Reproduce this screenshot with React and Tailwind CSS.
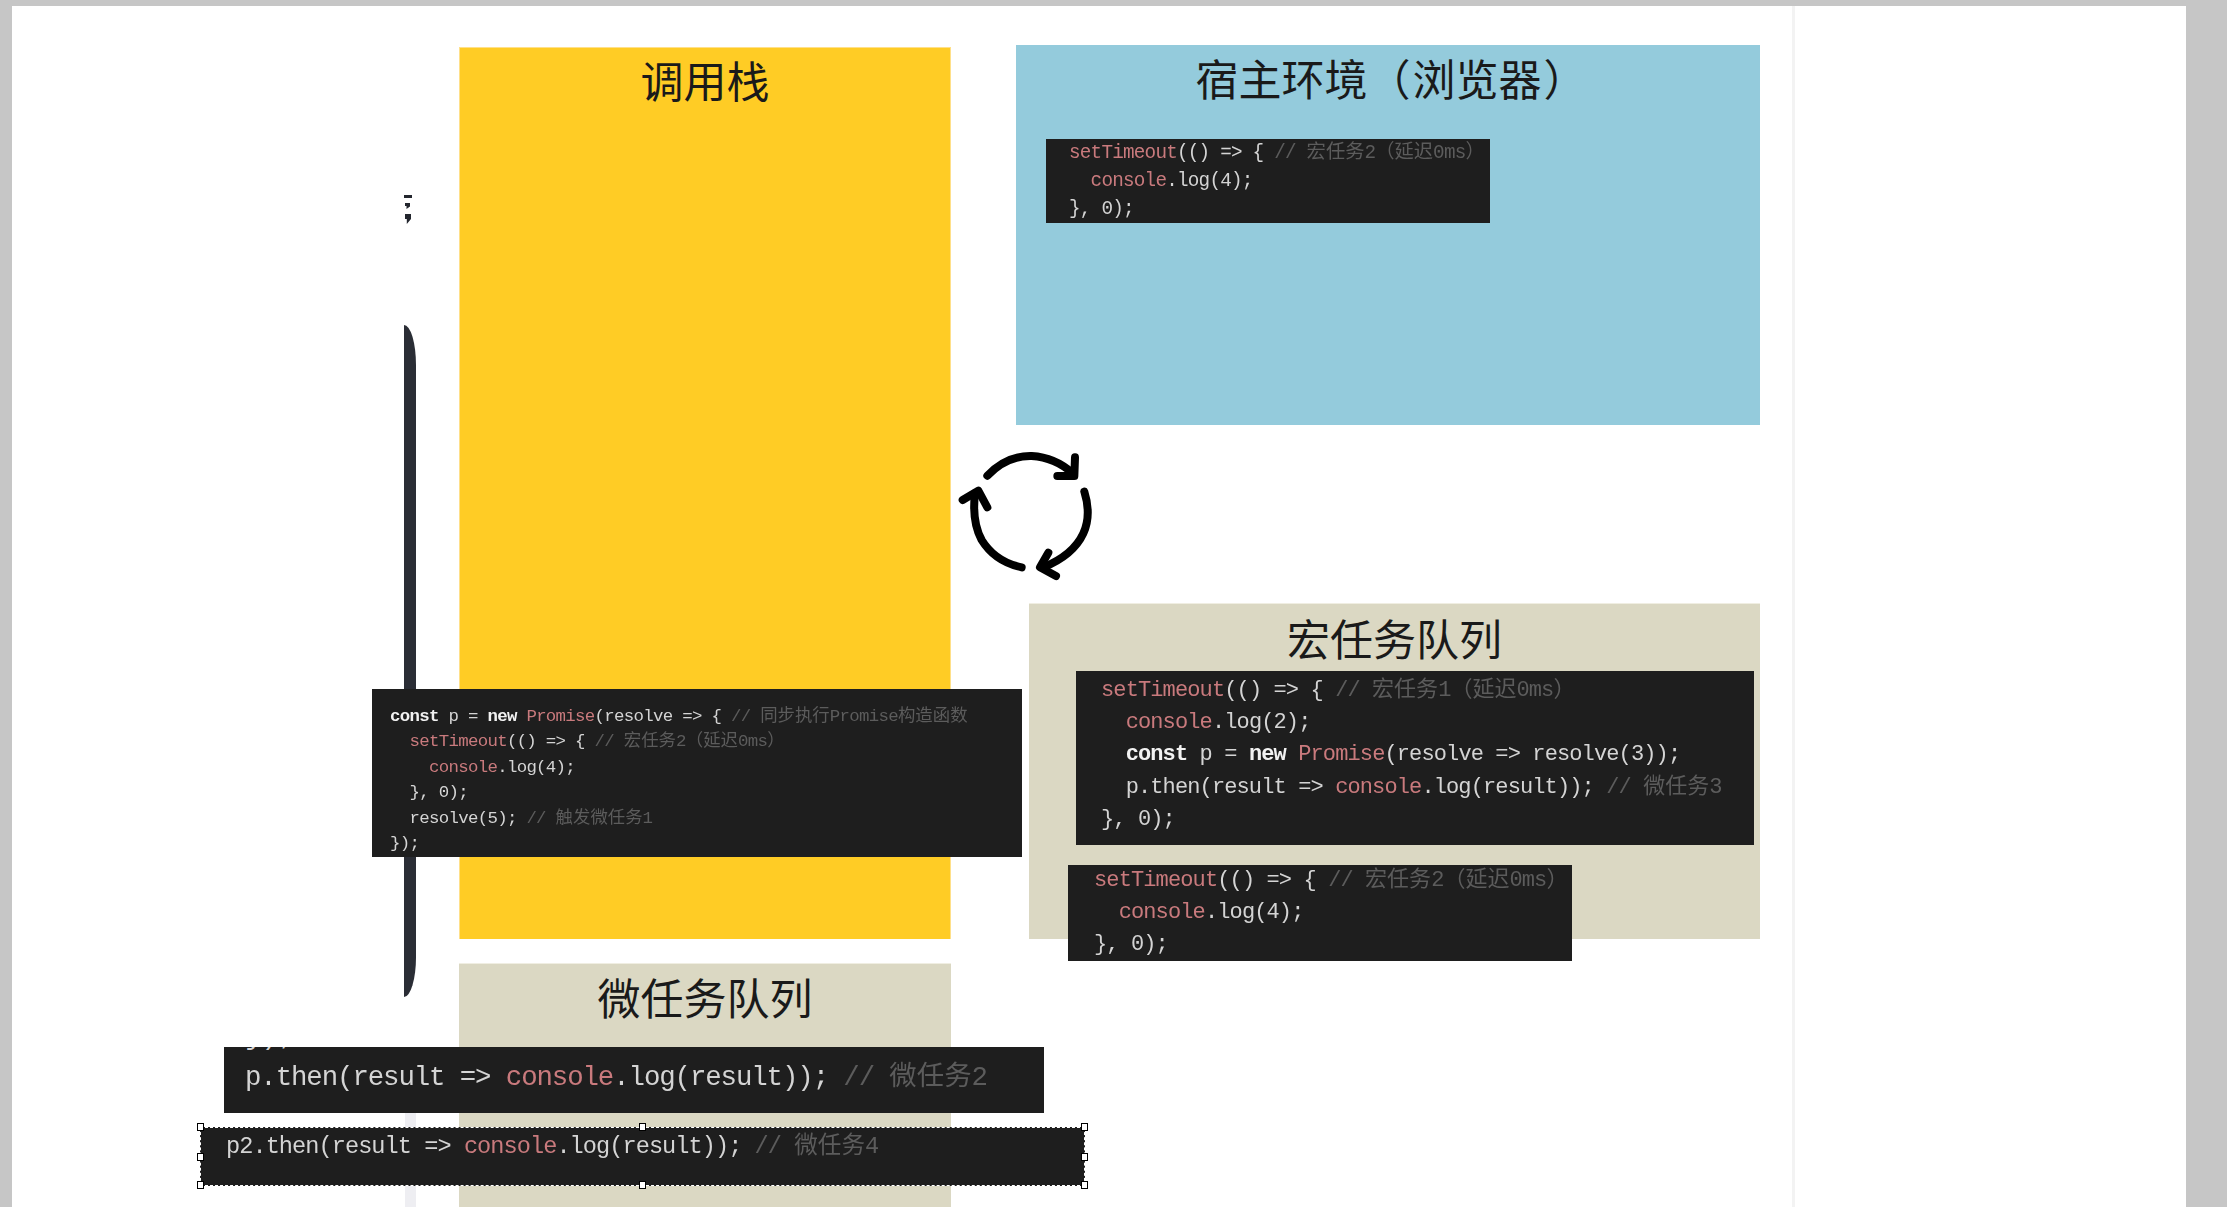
const cjk = "font-['Noto_Sans_CJK_SC','Noto_Sans',sans-serif]";

function J({ children }) {
  return <span className="tracking-normal">{children}</span>;
}
function P({ children }) {
  return <span className="text-[#c97a7d]">{children}</span>;
}
function K({ children }) {
  return <span className="font-bold text-[#f2f2f2]">{children}</span>;
}
function N({ children }) {
  return <span className="text-[#5c5c5c]">{children}</span>;
}
function Code({ className, children, extra }) {
  return (
    <div className={"overflow-hidden bg-[#1e1e1e] " + className}>
      {extra}
      <pre className="m-0 whitespace-pre font-['Liberation_Mono','Noto_Sans_CJK_SC',monospace] tracking-[-0.04em] text-[#d4d4d4] blur-[0.4px]">
        {children}
      </pre>
    </div>
  );
}
function Title({ className = "", children }) {
  return (
    <div className={"text-center text-[43px] leading-[50px] font-normal text-[#1a1a1a] " + cjk + " " + className}>
      {children}
    </div>
  );
}
function Handle({ className }) {
  return <div className={"absolute h-[8px] w-[7px] border border-black bg-white " + className} />;
}

export default function App() {
  return (
    <div className="flex h-[1207px] w-[2227px] overflow-hidden bg-[#c6c6c6] pt-[6px] pr-[41px] pl-[12px]">
      <div className="relative flex flex-1 items-stretch bg-white pl-[447px]">
        {/* left column: call stack + micro queue */}
        <div className="flex w-[492px] flex-col pt-[41px]">
          <div className="h-[892px] border-x border-t border-[#ffe08a] bg-[#ffcc25] pt-[6px]">
            <Title>调用栈</Title>
          </div>
          <div className="mt-[24px] flex-1 border-t border-[#f0eee2] bg-[#dbd8c3] pt-[7px]">
            <Title>微任务队列</Title>
          </div>
        </div>

        {/* right column: host + macro queue */}
        <div className="ml-[65px] flex w-[744px] flex-col pt-[39px]">
          <div className="flex h-[380px] flex-col bg-[#94cbdc] pt-[7px]">
            <Title className="pl-[6px]">
              宿主环境<span className="mr-[2px]">（</span>浏览器<span className="ml-[2px]">）</span>
            </Title>
            <Code className="mt-[37px] ml-[30px] h-[84px] w-[444px] pl-[23px] text-[19.3px] leading-[28px]">
              <P>setTimeout</P>{"(() => { "}<N>{"// "}<J>宏任务</J>2<J>（延迟</J>0ms<J>）</J></N>{"\n  "}<P>console</P>{".log(4);\n}, 0);"}
            </Code>
          </div>
          <div className="mt-[178px] ml-[13px] h-[336px] border-t border-[#f0eee2] bg-[#dbd8c3] pt-[8px]">
            <Title>宏任务队列</Title>
            <Code className="mt-[9px] ml-[47px] h-[174px] w-[678px] pt-[4px] pl-[25px] text-[22px] leading-[32.2px]">
              <P>setTimeout</P>{"(() => { "}<N>{"// "}<J>宏任务</J>1<J>（延迟</J>0ms<J>）</J></N>{"\n  "}<P>console</P>{".log(2);\n  "}<K>const</K>{" p = "}<K>new</K>{" "}<P>Promise</P>{"(resolve => resolve(3));\n  p.then(result => "}<P>console</P>{".log(result)); "}<N>{"// "}<J>微任务</J>3</N>{"\n}, 0);"}
            </Code>
            <Code className="mt-[20px] ml-[39px] h-[96px] w-[504px] pl-[26px] text-[22px] leading-[32px]">
              <P>setTimeout</P>{"(() => { "}<N>{"// "}<J>宏任务</J>2<J>（延迟</J>0ms<J>）</J></N>{"\n  "}<P>console</P>{".log(4);\n}, 0);"}
            </Code>
          </div>
        </div>

        {/* right guide */}
        <div className="ml-[32px] w-[3px] bg-[#f3f3f3]" />

        {/* clipped remnants of an off-slide object */}
        <div className="absolute top-[189px] left-[392px] h-[30px] w-[8px] overflow-hidden">
          <div className="absolute top-0 left-0 h-[3px] w-[8px] bg-[#23262e]" />
          <div className="absolute top-[8px] left-[1px] h-[6px] w-[5px] bg-[#23262e] [clip-path:polygon(0_0,100%_0,100%_60%,30%_100%,30%_50%,0_50%)]" />
          <div className="absolute top-[19px] left-[1px] h-[10px] w-[6px] bg-[#23262e] [clip-path:polygon(0_0,100%_0,100%_50%,30%_100%,30%_50%,0_50%)]" />
        </div>
        <div className="absolute top-[319px] left-[392px] h-[672px] w-[12px] rounded-tr-[12px_40px] rounded-br-[12px_40px] bg-[#2a2d35]" />
        <div className="absolute top-[1107px] bottom-0 left-[393px] w-[11px] bg-[#eeeef2]" />

        {/* loop icon */}
        <svg
          className="absolute top-[424px] left-[928px] h-[170px] w-[180px]"
          viewBox="0 0 540 510"
          fill="none"
          stroke="#000"
          strokeWidth="24"
          strokeLinecap="round"
          strokeLinejoin="round"
        >
          <path d="M142 137 Q200 76 275 78 Q345 82 398 130" />
          <path d="M405 82 L403 138 L352 138" />
          <path d="M433 185 Q455 255 430 310 Q400 375 310 412" />
          <path d="M325 368 L300 412 L348 438" />
          <path d="M245 412 Q165 395 125 330 Q95 275 105 190" />
          <path d="M68 210 L115 182 L142 232" />
        </svg>

        {/* Promise snippet pasted over the call stack */}
        <Code className="absolute top-[683px] left-[360px] h-[168px] w-[650px] pt-[15px] pl-[18px] text-[17.4px] leading-[25.4px]">
          <K>const</K>{" p = "}<K>new</K>{" "}<P>Promise</P>{"(resolve => { "}<N>{"// "}<J>同步执行</J>Promise<J>构造函数</J></N>{"\n  "}<P>setTimeout</P>{"(() => { "}<N>{"// "}<J>宏任务</J>2<J>（延迟</J>0ms<J>）</J></N>{"\n    "}<P>console</P>{".log(4);\n  }, 0);\n  resolve(5); "}<N>{"// "}<J>触发微任务</J>1</N>{"\n});"}
        </Code>

        <Code
          className="absolute top-[1041px] left-[212px] h-[66px] w-[820px] pl-[21px] text-[27.4px] leading-[62px]"
          extra={
            <span className="absolute top-[-41px] left-[21px] font-['Liberation_Mono',monospace] text-[#d4d4d4]">
              {"});"}
            </span>
          }
        >
          {"p.then(result => "}<P>console</P>{".log(result)); "}<N>{"// "}<J>微任务</J>2</N>
        </Code>

        {/* selected snippet */}
        <div className="absolute top-[1121px] left-[188px] h-[59px] w-[885px]">
          <Code className="h-full w-full border border-dashed border-white pl-[25px] text-[23.6px] leading-[38px]">
            {"p2.then(result => "}<P>console</P>{".log(result)); "}<N>{"// "}<J>微任务</J>4</N>
          </Code>
          <Handle className="top-[-4px] left-[-3px]" />
          <Handle className="top-[-4px] left-[439px]" />
          <Handle className="top-[-4px] right-[-3px]" />
          <Handle className="top-[26px] left-[-3px]" />
          <Handle className="top-[26px] right-[-3px]" />
          <Handle className="bottom-[-3px] left-[-3px]" />
          <Handle className="bottom-[-3px] left-[439px]" />
          <Handle className="right-[-3px] bottom-[-3px]" />
        </div>
      </div>
    </div>
  );
}
